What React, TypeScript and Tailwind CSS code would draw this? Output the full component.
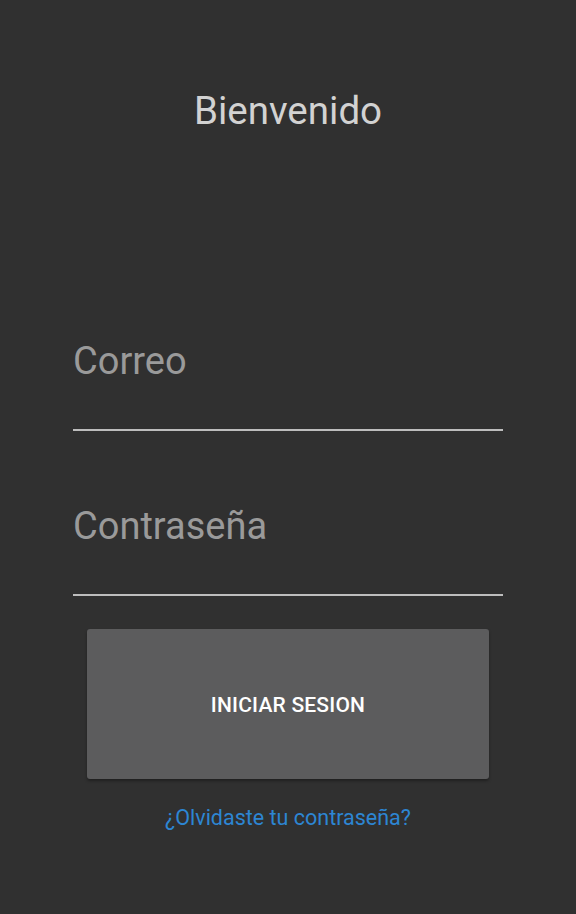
import { useState } from "react";

const ROBOTO = { fontFamily: "Roboto, 'Noto Sans', sans-serif" };

function UnderlineInput({
  value, onChange, placeholder, type = "text",
}: { value: string; onChange: (v: string) => void; placeholder: string; type?: string }) {
  return (
    <input
      type={type}
      value={value}
      onChange={(e) => onChange(e.target.value)}
      placeholder={placeholder}
      className="w-full h-[94px] pt-0 pb-[45px] bg-transparent border-b-2 border-[#bdbdbd] outline-none text-[38px] text-[#d6d6d6] placeholder:text-[#9a9a9a]"
      style={ROBOTO}
    />
  );
}

export default function App() {
  const [email, setEmail] = useState("");
  const [password, setPassword] = useState("");

  return (
    <div className="w-full min-h-screen bg-[#303030] flex flex-col" style={ROBOTO}>
      <h1 className="mt-[88px] text-center text-[38.5px] leading-[46px] text-[#d2d2d2]">Bienvenido</h1>

      <div className="mt-[203px] px-[73px] flex flex-col gap-[71px]">
        <UnderlineInput value={email} onChange={setEmail} placeholder="Correo" type="email" />
        <UnderlineInput value={password} onChange={setPassword} placeholder="Contraseña" type="password" />
      </div>

      <div className="mt-[33px] px-[87px]">
        <button
          type="button"
          className="w-full h-[150px] pt-[4px] rounded-[3px] bg-[#5c5c5d] text-white text-[21px] font-medium tracking-[0.2px] shadow-[0_2px_3px_rgba(0,0,0,0.35)]"
        >
          INICIAR SESION
        </button>
      </div>

      <button type="button" className="mt-[25px] self-center text-[21.5px] leading-[28px] text-[#2d86d3]">
        ¿Olvidaste tu contraseña?
      </button>
    </div>
  );
}
